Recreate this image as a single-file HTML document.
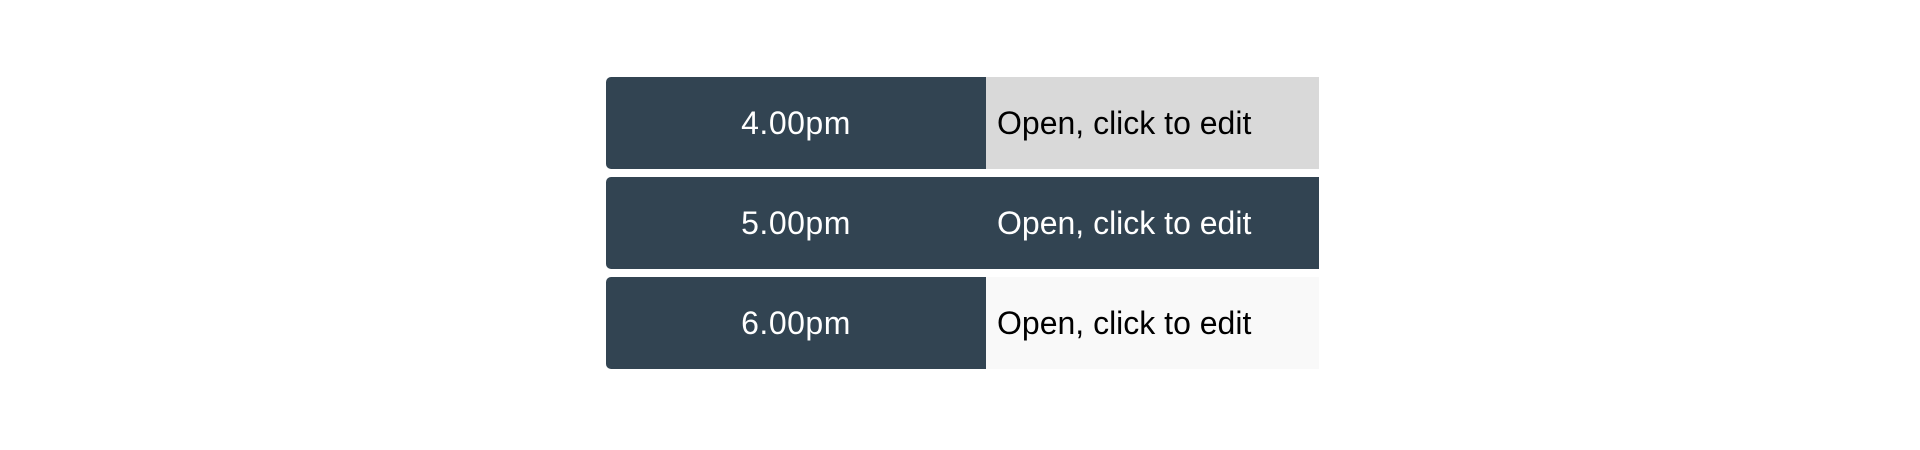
<!DOCTYPE html>
<html><head><meta charset="utf-8"><style>
html,body{margin:0;padding:0;background:#fff;width:1920px;height:450px;overflow:hidden}
.row{position:absolute;left:606px;width:713px;height:92px;display:flex;font-family:"Liberation Sans",sans-serif;font-size:32px}
.t{width:380px;background:#324452;color:#fff;border-radius:5px 0 0 5px;display:flex;align-items:center;justify-content:center;letter-spacing:0.5px}
.o{flex:1;display:flex;align-items:center;padding-left:11px;color:#000;letter-spacing:0px}
</style></head><body>
<div class="row" style="top:77px"><div class="t">4.00pm</div><div class="o" style="background:#d9d9d9">Open, click to edit</div></div>
<div class="row" style="top:177px"><div class="t">5.00pm</div><div class="o" style="background:#324452;color:#fff">Open, click to edit</div></div>
<div class="row" style="top:277px"><div class="t">6.00pm</div><div class="o" style="background:#f9f9f9">Open, click to edit</div></div>
</body></html>
